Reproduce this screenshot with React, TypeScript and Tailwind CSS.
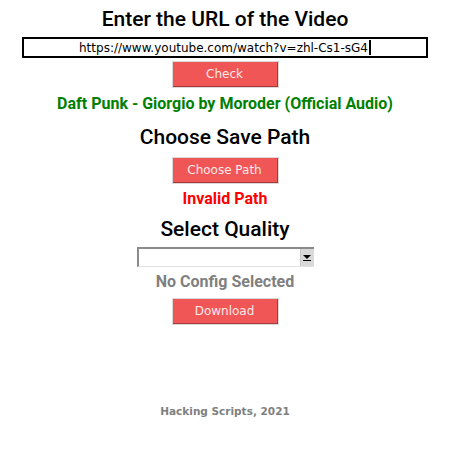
export default function App() {
  const heading = "font-['Roboto',sans-serif] text-[21px] font-medium leading-[24px] text-black";
  return (
    <div className="flex h-[450px] w-[450px] flex-col items-center bg-white font-['DejaVu_Sans',sans-serif]">
      <h1 className={`${heading} mt-[7px]`}>Enter the URL of the Video</h1>

      <div className="mt-[6px] flex h-[21px] w-[406px] items-center justify-center border-2 border-black bg-white text-[12px] text-black">
        <span>https://www.youtube.com/watch?v=zhl-Cs1-sG4</span>
        <span className="ml-px h-[15px] w-[2px] bg-black" />
      </div>

      <TkButton label="Check" className="mt-[3px]" />

      <p className="mt-[6px] font-['Roboto',sans-serif] text-[16px] font-bold leading-[20px] text-[#008000]">
        Daft Punk - Giorgio by Moroder (Official Audio)
      </p>

      <h2 className={`${heading} mt-[11px]`}>Choose Save Path</h2>

      <TkButton label="Choose Path" className="mt-[8px]" />

      <p className="mt-[5px] font-['Roboto',sans-serif] text-[16px] font-bold leading-[20px] text-[#ff0000]">
        Invalid Path
      </p>

      <h2 className={`${heading} mt-[8px]`}>Select Quality</h2>

      <div className="mt-[6px] flex h-[20px] w-[177px] border-l-2 border-t-2 border-[#8a8a8a] border-b border-b-[#e2e2e2] bg-white">
        <div className="flex-1" />
        <div className="flex h-full w-[14px] flex-col items-center justify-center border-l border-[#c8c8c8] bg-[#d9d9d9]">
          <svg width="8" height="6" viewBox="0 0 8 6">
            <path d="M0 0 H8 L4 4 Z" fill="#000" />
            <rect x="0" y="5" width="8" height="1" fill="#000" />
          </svg>
        </div>
      </div>

      <p className="mt-[5px] font-['Roboto',sans-serif] text-[16px] font-bold leading-[20px] text-[#808080]">
        No Config Selected
      </p>

      <TkButton label="Download" className="mt-[6px]" />

      <p className="mt-auto mb-[30px] text-[10.5px] font-bold text-[#808080]">Hacking Scripts, 2021</p>
    </div>
  );
}

function TkButton({ label, className }: { label: string; className?: string }) {
  return (
    <div className={`border border-[#d9d9d9] ${className ?? ""}`}>
      <button className="flex h-[25px] w-[105px] items-center justify-center border-r border-b border-[#a83a3a] bg-[#f05656] text-[12px] text-[#fde8e8]">
        {label}
      </button>
    </div>
  );
}
